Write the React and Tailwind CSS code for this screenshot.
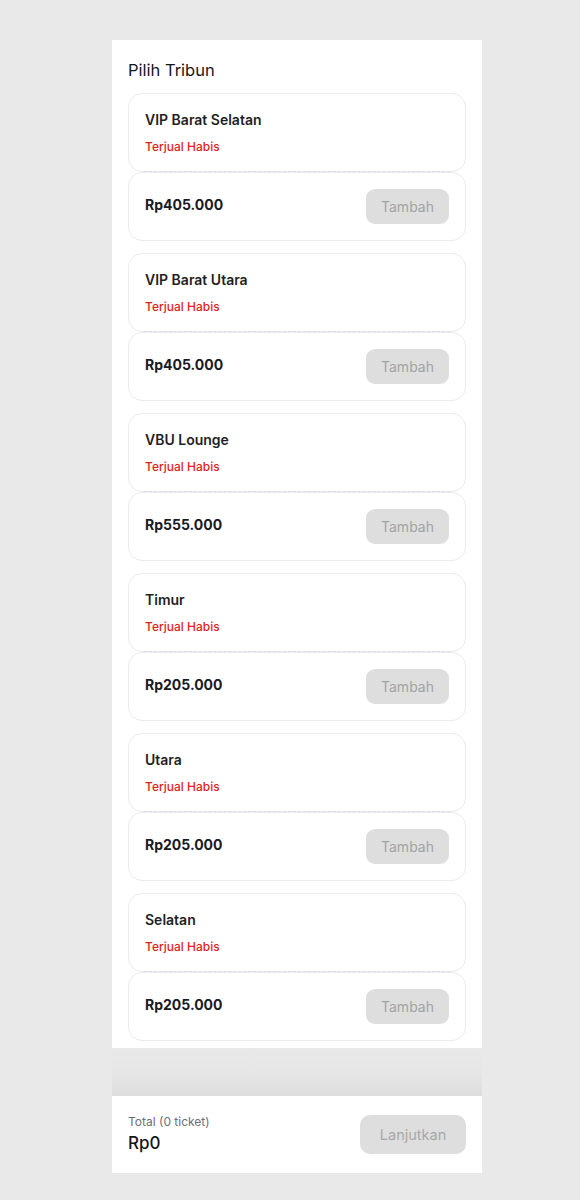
import React from "react";

const items = [
  { name: "VIP Barat Selatan", price: "Rp405.000" },
  { name: "VIP Barat Utara", price: "Rp405.000" },
  { name: "VBU Lounge", price: "Rp555.000" },
  { name: "Timur", price: "Rp205.000" },
  { name: "Utara", price: "Rp205.000" },
  { name: "Selatan", price: "Rp205.000" },
];

function Card({ name, price }) {
  return (
    <div className="relative flex flex-col">
      <div className="h-[79px] rounded-[14px] border border-[#ebebf0] bg-white px-4 pt-[16px]">
        <div className="text-[14px] font-semibold leading-[20px] text-[#1f1f24]">{name}</div>
        <div className="mt-[9px] text-[12px] font-medium leading-[16px] text-[#e11d1d]">Terjual Habis</div>
      </div>
      <div className="mx-4 -mt-[1px] h-0 border-t border-dashed border-[#dcdce0]"></div>
      <div className="flex h-[69px] items-center justify-between rounded-[14px] border border-[#ebebf0] bg-white px-4">
        <div className="-mt-[4px] text-[14px] font-bold leading-[20px] text-[#1a1a1f]">{price}</div>
        <button className="h-[35px] w-[83px] rounded-[9px] bg-[#dedede] text-[14px] text-[#a3a3a3]">Tambah</button>
      </div>
    </div>
  );
}

export default function App() {
  return (
    <div className="min-h-[1200px] bg-[#e9e9e9] pt-[40px]" style={{ fontFamily: "Inter, 'Noto Sans', sans-serif" }}>
      <div className="ml-[112px] w-[370px]">
        <div className="bg-white px-4 pb-[7px] pt-[18px]">
          <div className="text-[16.5px] font-normal leading-[24px] text-[#16161a]">Pilih Tribun</div>
          <div className="mt-[11px] flex flex-col gap-[12px]">
            {items.map((it) => (
              <Card key={it.name} {...it} />
            ))}
          </div>
        </div>
        <div className="h-[48px] bg-gradient-to-b from-[#e9e9e9] via-[#e6e6e6] to-[#dddddd]"></div>
        <div className="flex h-[77px] items-center justify-between bg-white px-4">
          <div className="-mt-[2px] flex flex-col">
            <div className="text-[12px] leading-[16px] text-[#6e6e7a]">Total (0 ticket)</div>
            <div className="mt-[2px] text-[17px] font-medium leading-[22px] text-[#16161a]">Rp0</div>
          </div>
          <button className="h-[39px] w-[106px] rounded-[10px] bg-[#dedede] text-[14.5px] text-[#a8a8a8]">Lanjutkan</button>
        </div>
      </div>
    </div>
  );
}
